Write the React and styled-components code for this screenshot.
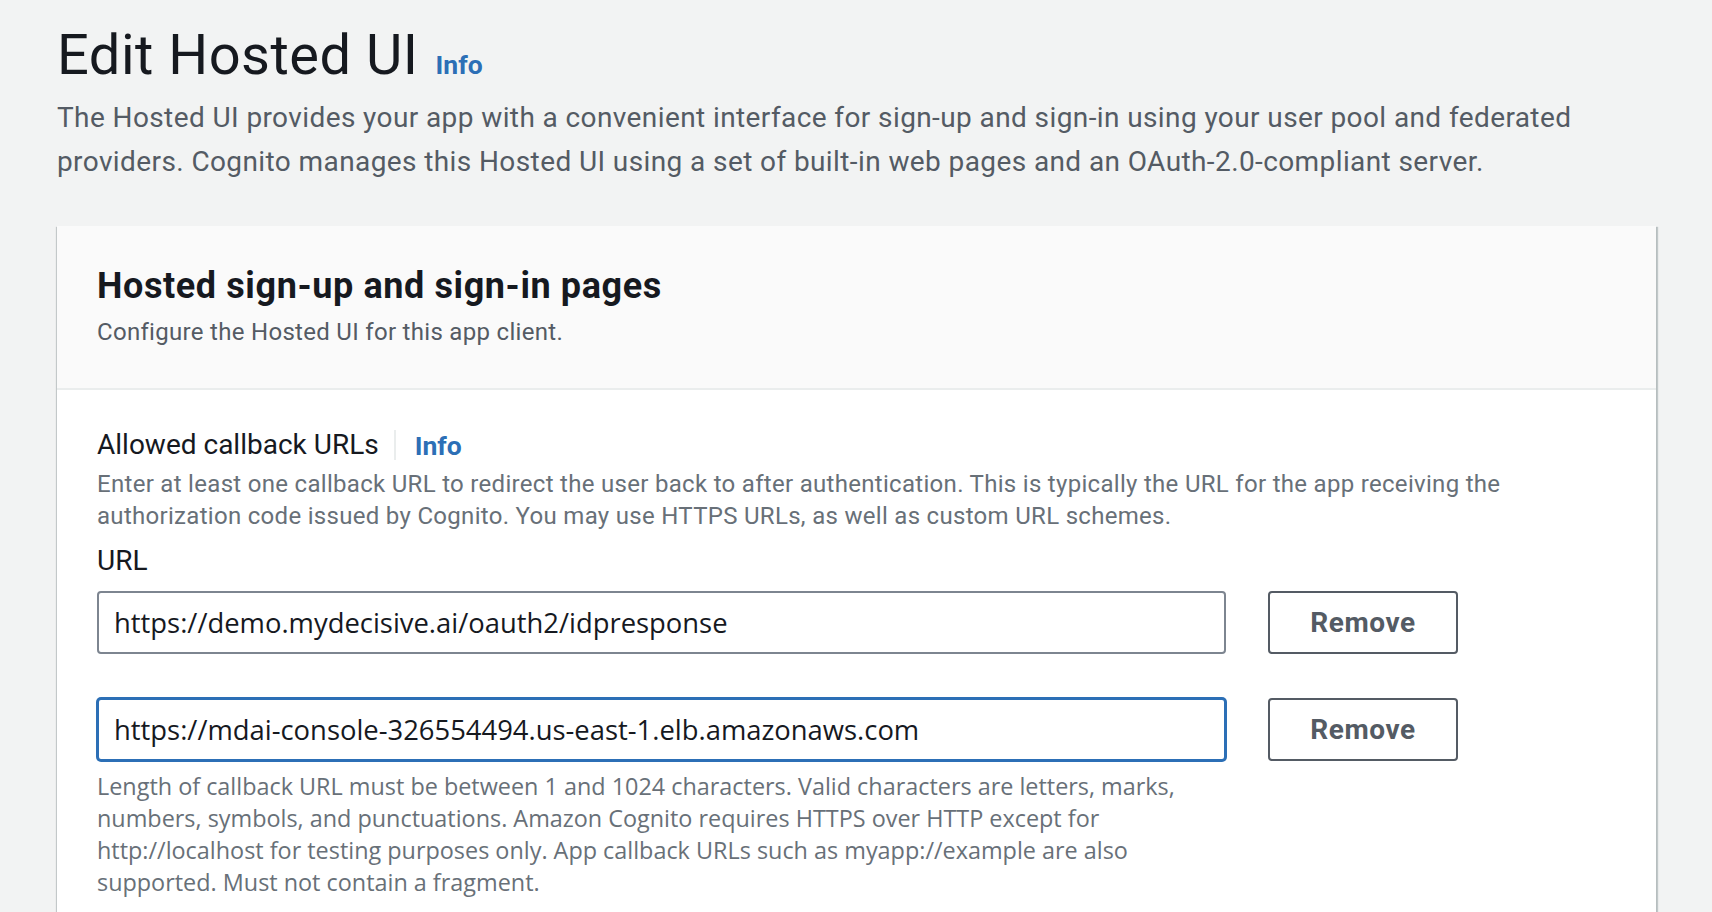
import React from 'react'
import styled, { createGlobalStyle } from 'styled-components'

const GlobalStyle = createGlobalStyle`
    html, body {
        margin: 0;
        padding: 0;
        background: #f2f3f3;
    }
    body {
        font-family: Roboto, "Noto Sans", sans-serif;
        color: #16191f;
    }
`

const urls = [
    { value: 'https://demo.mydecisive.ai/oauth2/idpresponse', focused: false },
    { value: 'https://mdai-console-326554494.us-east-1.elb.amazonaws.com', focused: true },
]

const App = () => {
    return (
        <>
            <GlobalStyle />
            <Page>
                <TitleRow>
                    <Title>Edit Hosted UI</Title>
                    <InfoLink href="#">Info</InfoLink>
                </TitleRow>
                <PageDescription>
                    The Hosted UI provides your app with a convenient interface for sign-up and sign-in using your user pool and federated
                    providers. Cognito manages this Hosted UI using a set of built-in web pages and an OAuth-2.0-compliant server.
                </PageDescription>

                <Card>
                    <CardHeader>
                        <CardTitle>Hosted sign-up and sign-in pages</CardTitle>
                        <CardSubtitle>Configure the Hosted UI for this app client.</CardSubtitle>
                    </CardHeader>
                    <CardBody>
                        <LabelRow>
                            <FieldLabel>Allowed callback URLs</FieldLabel>
                            <Divider />
                            <InfoLink href="#">Info</InfoLink>
                        </LabelRow>
                        <Constraint>
                            Enter at least one callback URL to redirect the user back to after authentication. This is typically the URL for the app receiving the
                            authorization code issued by Cognito. You may use HTTPS URLs, as well as custom URL schemes.
                        </Constraint>
                        <SubLabel>URL</SubLabel>
                        <UrlList>
                            {urls.map((u) => (
                                <UrlRow key={u.value}>
                                    <UrlInput defaultValue={u.value} $focused={u.focused} readOnly />
                                    <RemoveButton type="button">Remove</RemoveButton>
                                </UrlRow>
                            ))}
                        </UrlList>
                        <HelpText>
                            Length of callback URL must be between 1 and 1024 characters. Valid characters are letters, marks,
                            numbers, symbols, and punctuations. Amazon Cognito requires HTTPS over HTTP except for
                            http://localhost for testing purposes only. App callback URLs such as myapp://example are also
                            supported. Must not contain a fragment.
                        </HelpText>
                    </CardBody>
                </Card>
            </Page>
        </>
    )
}

const Page = styled.main`
    padding: 23px 56px 0 57px;
`

const TitleRow = styled.div`
    display: flex;
    align-items: baseline;
    gap: 17px;
`

const Title = styled.h1`
    margin: 0;
    font-size: 56px;
    line-height: 64px;
    font-weight: 400;
    letter-spacing: 0.5px;
    color: #16191f;
`

const InfoLink = styled.a`
    font-size: 26.5px;
    font-weight: 700;
    color: #2c6fb6;
    text-decoration: none;
`

const PageDescription = styled.p`
    margin: 9px 0 0;
    font-size: 28px;
    line-height: 44px;
    color: #545b64;
    letter-spacing: 0.4px;
`

const Card = styled.section`
    margin-top: 42px;
    background: #ffffff;
    box-shadow: 0 1px 1px 0 rgba(0, 28, 36, 0.3), 2px 1px 1px 0 rgba(0, 28, 36, 0.2), -1px 1px 1px 0 rgba(0, 28, 36, 0.15);
    min-height: 700px;
`

const CardHeader = styled.header`
    background: #fafafa;
    padding: 38px 40px 40px;
    border-bottom: 2px solid #eaeded;
`

const CardTitle = styled.h2`
    margin: 0;
    font-size: 36px;
    line-height: 44px;
    font-weight: 700;
    color: #16191f;
    letter-spacing: 0.6px;
`

const CardSubtitle = styled.p`
    margin: 8px 0 0;
    font-size: 24px;
    line-height: 32px;
    color: #545b64;
    letter-spacing: 0.3px;
`

const CardBody = styled.div`
    padding: 35px 40px 40px;
`

const LabelRow = styled.div`
    display: flex;
    align-items: center;
    height: 40px;
`

const FieldLabel = styled.span`
    font-size: 28px;
    line-height: 40px;
    color: #16191f;
`

const Divider = styled.span`
    width: 2px;
    height: 30px;
    background: #eaeded;
    margin: 0 19px 0 15px;
`

const Constraint = styled.p`
    margin: 3px 0 0;
    font-size: 24px;
    line-height: 32px;
    color: #687078;
    letter-spacing: 0.3px;
`

const SubLabel = styled.div`
    margin-top: 9px;
    font-size: 28px;
    line-height: 40px;
    color: #16191f;
`

const UrlList = styled.div`
    margin-top: 10px;
    display: flex;
    flex-direction: column;
    gap: 44px;
`

const UrlRow = styled.div`
    display: flex;
    align-items: center;
    gap: 42px;
`

const UrlInput = styled.input`
    box-sizing: border-box;
    flex: 0 0 1129px;
    height: 63px;
    padding: 0 15px;
    border: 2px solid ${(p) => (p.$focused ? '#2c6fb6' : '#7d8590')};
    box-shadow: ${(p) => (p.$focused ? '0 0 0 1px #2c6fb6' : 'none')};
    border-radius: 4px;
    background: #ffffff;
    font-family: "Open Sans", "Noto Sans", sans-serif;
    font-size: 27.4px;
    color: #16191f;
    outline: none;
`

const RemoveButton = styled.button`
    box-sizing: border-box;
    width: 190px;
    height: 63px;
    border: 2px solid #545b64;
    border-radius: 4px;
    background: #ffffff;
    font-family: Roboto, sans-serif;
    font-size: 28px;
    font-weight: 700;
    color: #545b64;
    letter-spacing: 0.6px;
`

const HelpText = styled.p`
    margin: 9px 0 0;
    width: 1129px;
    font-family: "Open Sans", "Noto Sans", sans-serif;
    font-size: 23.4px;
    line-height: 32px;
    color: #687078;
`

export default App
